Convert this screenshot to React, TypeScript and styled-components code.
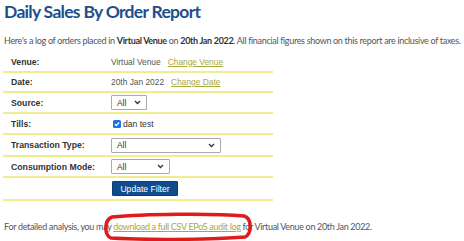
import React from "react";
import styled, { createGlobalStyle } from "styled-components";

const Global = createGlobalStyle`
  html, body { margin: 0; padding: 0; background: #fff; }
  body { font-family: "Liberation Sans", Arial, sans-serif; }
`;

const Page = styled.div`
  position: relative;
  padding: 0 4px;
  width: 464px;
  height: 241px;
  overflow: hidden;
  box-sizing: border-box;
`;

const Title = styled.h1`
  margin: 0;
  padding-top: 1px;
  font-family: Lato, "Open Sans", sans-serif;
  font-weight: 700;
  font-size: 17.5px;
  line-height: 22px;
  color: #1c4f8c;
  letter-spacing: -0.7px;
`;

const Intro = styled.p`
  margin: 12px 0 0;
  font-family: Lato, sans-serif;
  font-size: 9px;
  line-height: 12px;
  letter-spacing: -0.32px;
  color: #555;
  white-space: nowrap;
  b { color: #333; }
`;

const Table = styled.div`
  margin-top: 5px;
  width: 270px;
  margin-left: -1px;
`;

const Row = styled.div<{ $h: number }>`
  display: grid;
  grid-template-columns: 108px 1fr;
  align-items: center;
  height: ${(p) => p.$h}px;
  border-bottom: 2px solid #eeee8e;
  box-sizing: border-box;
`;

const Label = styled.div`
  padding-left: 8px;
  font-size: 8.7px;
  font-weight: 700;
  color: #333;
`;

const Value = styled.div`
  display: flex;
  align-items: center;
  gap: 7px;
  font-size: 8.4px;
  color: #555;
`;

const Link = styled.a`
  color: #a9a83c;
  text-decoration: underline;
`;

const Select = styled.div<{ $w: number }>`
  width: ${(p) => p.$w}px;
  height: 15px;
  border: 1px solid #aaa;
  border-radius: 1px;
  box-sizing: border-box;
  display: flex;
  align-items: center;
  justify-content: space-between;
  padding: 0 5px 0 5px;
  font-size: 8.4px;
  color: #333;
`;

const Check = styled.span`
  display: inline-flex;
  align-items: center;
  gap: 2px;
  margin-left: 2px;
  font-size: 8.6px;
  color: #333;
`;

const Box = styled.span`
  width: 8px;
  height: 8px;
  border-radius: 1.5px;
  background: #1a73e8;
  display: inline-flex;
  align-items: center;
  justify-content: center;
`;

const Button = styled.button`
  height: 15px;
  width: 66px;
  margin-left: 1px;
  padding: 0;
  border: 1px solid #0c3f78;
  border-radius: 1px;
  background: #0f4c8e;
  color: #fff;
  font-family: "Liberation Sans", Arial, sans-serif;
  font-size: 8.6px;
`;

const Footer = styled.p`
  margin: 20px 0 0;
  font-family: Lato, sans-serif;
  font-size: 9px;
  line-height: 12px;
  letter-spacing: -0.32px;
  color: #555;
  white-space: nowrap;
  a { color: #a9a83c; text-decoration: underline; }
`;

const Ring = styled.svg`
  position: absolute;
  left: 103px;
  top: 212px;
  pointer-events: none;
`;

const Chevron = () => (
  <svg width="7" height="5" viewBox="0 0 7 5">
    <path d="M1 1l2.5 2.5L6 1" fill="none" stroke="#333" strokeWidth="1.3" />
  </svg>
);

export default function App() {
  return (
    <Page>
      <Global />
      <Title>Daily Sales By Order Report</Title>
      <Intro>
        Here's a log of orders placed in <b>Virtual Venue</b> on <b>20th Jan 2022</b>. All financial figures shown on this report are inclusive of taxes.
      </Intro>
      <Table>
        <Row $h={21}>
          <Label>Venue:</Label>
          <Value>Virtual Venue <Link>Change Venue</Link></Value>
        </Row>
        <Row $h={20}>
          <Label>Date:</Label>
          <Value>20th Jan 2022 <Link>Change Date</Link></Value>
        </Row>
        <Row $h={21}>
          <Label>Source:</Label>
          <Value><Select $w={36}>All <Chevron /></Select></Value>
        </Row>
        <Row $h={21}>
          <Label>Tills:</Label>
          <Value>
            <Check>
              <Box>
                <svg width="6" height="6" viewBox="0 0 7 7"><path d="M1 3.6l1.7 1.7L6 1.6" fill="none" stroke="#fff" strokeWidth="1.5" /></svg>
              </Box>
              dan test
            </Check>
          </Value>
        </Row>
        <Row $h={22}>
          <Label>Transaction Type:</Label>
          <Value><Select $w={110}>All <Chevron /></Select></Value>
        </Row>
        <Row $h={21}>
          <Label>Consumption Mode:</Label>
          <Value><Select $w={59}>All <Chevron /></Select></Value>
        </Row>
        <Row $h={23}>
          <Label />
          <Value><Button>Update Filter</Button></Value>
        </Row>
      </Table>
      <Footer>
        For detailed analysis, you may <a>download a full CSV EPoS audit log</a> for Virtual Venue on 20th Jan 2022.
      </Footer>
      <Ring width="150" height="29" viewBox="0 0 150 29">
        <path d="M9 5 C40 2 110 1 141 4 C149 6 149 22 142 25 C100 28 40 28 8 26 C1 23 1 8 9 5Z" fill="none" stroke="#e01b1b" strokeWidth="3.5" />
      </Ring>
    </Page>
  );
}
